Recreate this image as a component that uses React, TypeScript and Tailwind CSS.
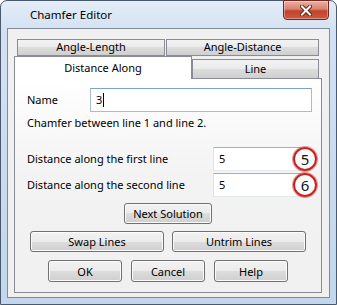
import React from 'react';

const btn =
  'h-[21px] rounded-[3px] border border-[#707070] bg-[linear-gradient(#f2f2f2_0%,#ebebeb_50%,#dddddd_50%,#cfcfcf_100%)] shadow-[inset_0_0_0_1px_#fbfbfb] text-[11px] leading-none text-black';

const tab =
  'flex items-center justify-center border border-[#898c95] bg-[linear-gradient(#f2f2f2_0%,#ebebeb_50%,#dddddd_50%,#cfcfcf_100%)] text-[11px] text-black';

const Badge = ({ n }: { n: string }) => (
  <div className="absolute left-[80px] top-0 flex h-[24px] w-[24px] items-center justify-center rounded-full border-2 border-[#d21d1d] bg-[radial-gradient(circle_at_40%_35%,#ffffff_55%,#e6e6e6_100%)] text-[15px] leading-none text-[#111] shadow-[0_0_0_1px_rgba(120,0,0,0.35)]">
    {n}
  </div>
);

const DistanceRow = ({ label, value, badge, className }: { label: string; value: string; badge: string; className: string }) => (
  <div className={`flex items-center ${className}`}>
    <span className="w-[198px] pl-[12px] text-[11px] text-black">{label}</span>
    <div className="relative">
      <div className="flex h-[24px] w-[88px] items-center border border-[#abadb3] border-b-[#e3e9ef] border-l-[#e2e3ea] border-r-[#dbdfe6] bg-white pl-[5px] text-[11px] text-black">
        {value}
      </div>
      <Badge n={badge} />
    </div>
  </div>
);

export default function App() {
  return (
    <div className="flex h-[305px] w-[337px] flex-col rounded-t-[7px] border border-[#4a5a6e] bg-[linear-gradient(#e4edf8_0%,#d3e1f2_10%,#c3d6ec_100%)] font-['Noto_Sans',sans-serif]">
      {/* title bar */}
      <div className="flex h-[27px] shrink-0">
        <span className="self-center pl-[29px] text-[11.5px] text-black">Chamfer Editor</span>
        <button className="ml-auto mr-[7px] mt-[-1px] flex h-[20px] w-[46px] items-center justify-center rounded-b-[4px] border border-[#6e2a20] bg-[linear-gradient(#eab1a4_0%,#d9826f_45%,#c2432d_55%,#cc5a3c_100%)] shadow-[inset_0_0_0_1px_rgba(255,255,255,0.35)]">
          <svg width="12" height="11" viewBox="0 0 12 11">
            <path d="M2 1.5 L10 9.5 M10 1.5 L2 9.5" stroke="#5a2318" strokeWidth="4" strokeLinecap="square" />
            <path d="M2 1.5 L10 9.5 M10 1.5 L2 9.5" stroke="#ffffff" strokeWidth="2" strokeLinecap="square" />
          </svg>
        </button>
      </div>

      {/* client area */}
      <div className="ml-[6px] h-[270px] w-[323px] border border-[#7f8b99] bg-[#f0f0f0] pl-[6px] pt-[10px]">
        {/* tab row 1 */}
        <div className="ml-[3px] flex h-[17px] gap-[1px]">
          <div className={`${tab} w-[148px]`}>Angle-Length</div>
          <div className={`${tab} w-[153px]`}>Angle-Distance</div>
        </div>
        {/* tab row 2 */}
        <div className="flex h-[22px] items-end">
          <div className="relative z-10 mb-[-1px] flex h-[23px] w-[178px] items-center justify-center border border-b-0 border-[#898c95] bg-white text-[11px] text-black">
            Distance Along
          </div>
          <div className={`${tab} h-[19px] w-[127px] border-b-0`}>Line</div>
        </div>

        {/* panel */}
        <div className="h-[215px] w-[308px] border border-[#898c95] bg-[linear-gradient(#ffffff_0%,#f3f3f3_45%,#f0f0f0_100%)]">
          <div className="mt-[9px] flex items-center">
            <span className="w-[75px] pl-[12px] text-[11px] text-black">Name</span>
            <div className="flex h-[24px] w-[222px] items-center border border-[#a4bcd8] border-t-[#7ea2cb] bg-white pl-[5px] text-[11px] text-black">
              3<span className="ml-[1px] h-[14px] w-[1px] bg-black" />
            </div>
          </div>
          <p className="mt-[3px] pl-[12px] text-[11px] leading-[16px] text-black">Chamfer between line 1 and line 2.</p>

          <DistanceRow className="mt-[16px]" label="Distance along the first line" value="5" badge="5" />
          <DistanceRow className="mt-[2px]" label="Distance along the second line" value="5" badge="6" />

          <div className="mt-[6px] flex justify-center">
            <button className={`${btn} w-[88px]`}>Next Solution</button>
          </div>
          <div className="mt-[7px] flex justify-center gap-[8px]">
            <button className={`${btn} w-[134px]`}>Swap Lines</button>
            <button className={`${btn} w-[134px]`}>Untrim Lines</button>
          </div>
          <div className="mt-[8px] flex justify-center gap-[9px]">
            <button className={`${btn} h-[22px] w-[74px]`}>OK</button>
            <button className={`${btn} h-[22px] w-[74px]`}>Cancel</button>
            <button className={`${btn} h-[22px] w-[74px]`}>Help</button>
          </div>
        </div>
      </div>
    </div>
  );
}
